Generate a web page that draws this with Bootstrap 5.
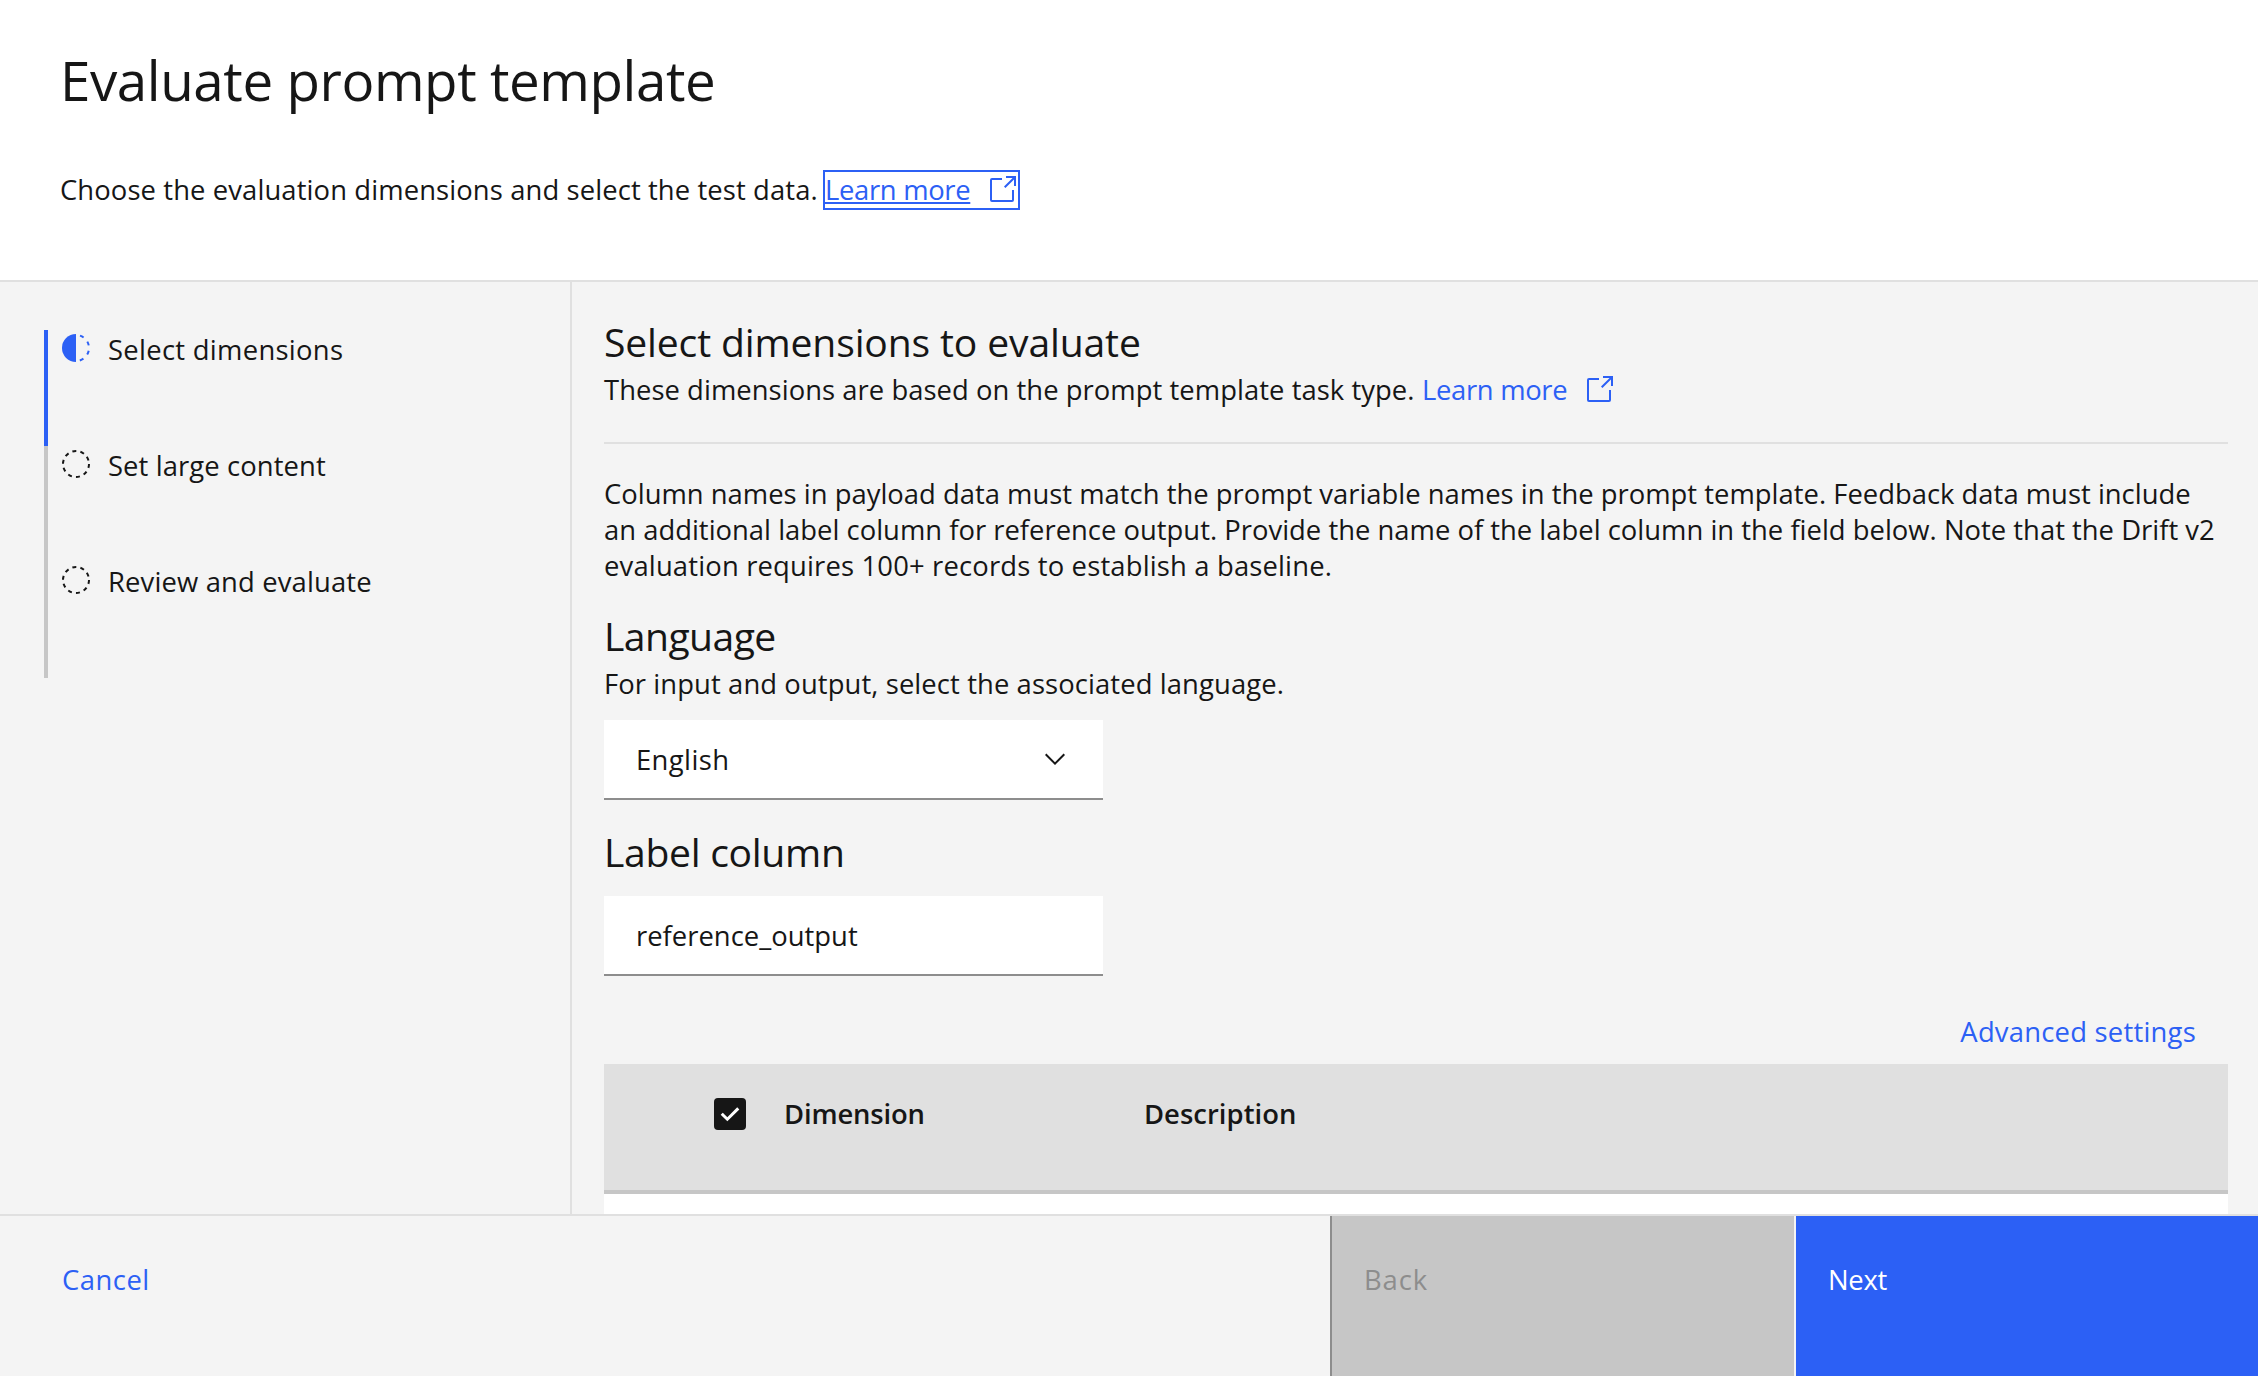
<!DOCTYPE html>
<html lang="en">
<head>
<meta charset="utf-8">
<meta name="viewport" content="width=device-width, initial-scale=1">
<title>Evaluate prompt template</title>
<link rel="stylesheet" href="https://cdn.jsdelivr.net/npm/bootstrap@5.3.0/dist/css/bootstrap.min.css">
<style>
  :root { --ink: #161616; --blue: #2c60f5; --layer: #f4f4f4; --line: #e0e0e0; --strong: #8d8d8d; --mute: #c6c6c6; }
  body { font-family: "Open Sans", "Noto Sans", sans-serif; font-size: 27.4px; line-height: 36px; color: var(--ink); background: var(--layer); white-space: nowrap; }
  a { color: var(--blue); }
  svg { display: block; flex: none; }
  .tearsheet-head { height: 282px; padding: 45px 60px 0; border-bottom: 2px solid var(--line); }
  .tearsheet-head h1 { font-size: 54.7px; line-height: 70px; letter-spacing: -.42px; margin: 0 0 55px; font-weight: 400; }
  .head-copy { width: 763px; letter-spacing: .11px; }
  .link-focus { border: 2px solid var(--blue); height: 40px; }
  .link-text { width: 145px; letter-spacing: -.312px; }
  .link-focus .link-text { text-decoration: underline; text-decoration-thickness: 2px; text-underline-offset: 2px; }
  .steps-pane { width: 572px; padding: 48px 0 0 44px; border-right: 2px solid var(--line); }
  .step-item { height: 116px; border-left: 4px solid var(--mute); padding: 2px 0 0 12px; }
  .step-item.current { border-color: var(--blue); }
  .step-name { margin: 0 0 0 16px; }
  .main-pane { padding: 36px 30px 0 32px; min-height: 0; }
  .main-pane h2 { font-size: 39.1px; line-height: 48px; margin: 0; font-weight: 400; }
  .sub-row { margin-top: 6px; }
  .sub-copy { width: 818px; letter-spacing: .05px; }
  .sub-row svg { margin-top: 2px; }
  .rule { height: 2px; background: var(--line); margin: 34px 0 32px; }
  .field-box, .field-box:focus { width: 499px; height: 80px; border: 0; border-bottom: 2px solid var(--strong); border-radius: 0; background: #fff; color: var(--ink); padding: 0 32px; font-size: 27.4px; line-height: 36px; }
  .field-value { letter-spacing: .4px; padding-top: 2px; }
  .grid-head { height: 130px; background: var(--line); border-bottom: 4px solid var(--mute); padding: 34px 0 0 110px; font-weight: 600; }
  .grid-head .head-label { margin-top: -2px; }
  .grid-body { height: 20px; background: #fff; }
  .check-box { width: 32px; height: 32px; border-radius: 4px; background: var(--ink); }
  .dim-head { width: 360px; margin-left: 38px; letter-spacing: -.15px; }
  .foot { height: 162px; border-top: 2px solid var(--line); }
  .foot .btn { border: 0; border-radius: 0; text-align: left; font-size: 27.4px; line-height: 36px; padding: 46px 0 0 32px; display: flex; align-items: flex-start; opacity: 1; }
  .foot .btn-cancel { width: 1330px; padding-left: 62px; color: var(--blue); letter-spacing: .5px; }
  .foot .btn-back { width: 464px; background: var(--mute); color: var(--strong); border-left: 2px solid var(--strong); padding-left: 32px; letter-spacing: .9px; }
  .foot .btn-next { width: 462px; margin-left: 2px; background: var(--blue); color: #fff; padding-left: 32px; letter-spacing: -.3px; }
</style>
<script src="https://cdn.jsdelivr.net/npm/bootstrap@5.3.0/dist/js/bootstrap.bundle.min.js"></script>
</head>
<body class="vh-100 overflow-hidden d-flex flex-column">
<header class="tearsheet-head bg-white flex-shrink-0">
  <h1>Evaluate prompt template</h1>
  <div class="d-flex align-items-center">
    <span class="head-copy">Choose the evaluation dimensions and select the test data.</span>
    <a href="#" class="link-focus d-flex align-items-center text-decoration-none"><span class="link-text">Learn more</span>
      <svg class="ms-3" width="32" height="32" viewBox="0 0 32 32" fill="currentColor"><path d="M26 28H6a2 2 0 0 1-2-2V6a2 2 0 0 1 2-2h10v2H6v20h20V16h2v10a2 2 0 0 1-2 2Z"/><path d="M20 2v2h6.586L18 12.586 19.414 14 28 5.414V12h2V2Z"/></svg>
    </a>
  </div>
</header>

<div class="d-flex flex-grow-1 overflow-hidden" style="min-height:0">
  <nav class="steps-pane flex-shrink-0">
    <div class="step-item current d-flex align-items-start">
      <svg width="32" height="32" viewBox="0 0 32 32"><path d="M16 2a14 14 0 0 0 0 28Z" fill="#2c60f5"/><path d="M16 3a13 13 0 0 1 0 26" fill="none" stroke="#2c60f5" stroke-width="2" stroke-dasharray="0 4.1 4 5.53 4 5.53 4 5.53 4 10"/></svg>
      <span class="step-name" style="letter-spacing:.3px">Select dimensions</span>
    </div>
    <div class="step-item d-flex align-items-start">
      <svg width="32" height="32" viewBox="0 0 32 32"><circle cx="16" cy="16" r="13" fill="none" stroke="#161616" stroke-width="2" stroke-dasharray="4 4.168"/></svg>
      <span class="step-name" style="letter-spacing:.1px">Set large content</span>
    </div>
    <div class="step-item d-flex align-items-start">
      <svg width="32" height="32" viewBox="0 0 32 32"><circle cx="16" cy="16" r="13" fill="none" stroke="#161616" stroke-width="2" stroke-dasharray="4 4.168"/></svg>
      <span class="step-name" style="letter-spacing:.15px">Review and evaluate</span>
    </div>
  </nav>

  <main class="main-pane flex-grow-1 d-flex flex-column">
    <h2 style="letter-spacing:-.14px">Select dimensions to evaluate</h2>
    <div class="sub-row d-flex">
      <span class="sub-copy">These dimensions are based on the prompt template task type.</span>
      <a href="#" class="d-flex text-decoration-none"><span class="link-text">Learn more</span>
        <svg class="ms-3" width="32" height="32" viewBox="0 0 32 32" fill="currentColor"><path d="M26 28H6a2 2 0 0 1-2-2V6a2 2 0 0 1 2-2h10v2H6v20h20V16h2v10a2 2 0 0 1-2 2Z"/><path d="M20 2v2h6.586L18 12.586 19.414 14 28 5.414V12h2V2Z"/></svg>
      </a>
    </div>
    <div class="rule flex-shrink-0"></div>
    <p class="mb-0" style="letter-spacing:.012px">Column names in payload data must match the prompt variable names in the prompt template. Feedback data must include<br>an additional label column for reference output. Provide the name of the label column in the field below. Note that the Drift v2<br><span style="letter-spacing:.17px">evaluation requires 100+ records to establish a baseline.</span></p>
    <h2 style="margin-top:28px;letter-spacing:-.55px">Language</h2>
    <p style="margin:6px 0 18px;letter-spacing:.1px">For input and output, select the associated language.</p>
    <button type="button" class="btn field-box flex-shrink-0 d-flex align-items-center justify-content-between"><span class="field-value">English</span>
      <svg width="32" height="32" viewBox="0 0 16 16" fill="#161616"><path d="M8 11 3 6l.7-.7L8 9.6l4.3-4.3.7.7z"/></svg>
    </button>
    <h2 style="margin:28px 0 20px;letter-spacing:-.3px">Label column</h2>
    <input class="form-control field-box flex-shrink-0" style="letter-spacing:.02px" value="reference_output" aria-label="Label column">
    <a href="#" class="align-self-end text-decoration-none" style="margin:38px 32px 14px 0;letter-spacing:.23px">Advanced settings</a>
    <div class="grid-head flex-shrink-0 d-flex align-items-start">
      <span class="check-box"><svg width="32" height="32" viewBox="4 4 24 24" fill="#fff"><path d="M14 21.5 9 16.54 10.59 15 14 18.35 21.41 11 23 12.58z"/></svg></span>
      <span class="dim-head head-label">Dimension</span>
      <span class="head-label" style="letter-spacing:.05px">Description</span>
    </div>
    <div class="grid-body flex-shrink-0"></div>
  </main>
</div>

<footer class="foot d-flex flex-shrink-0">
  <button type="button" class="btn btn-cancel">Cancel</button>
  <button type="button" class="btn btn-back" disabled>Back</button>
  <button type="button" class="btn btn-next">Next</button>
</footer>
</body>
</html>
